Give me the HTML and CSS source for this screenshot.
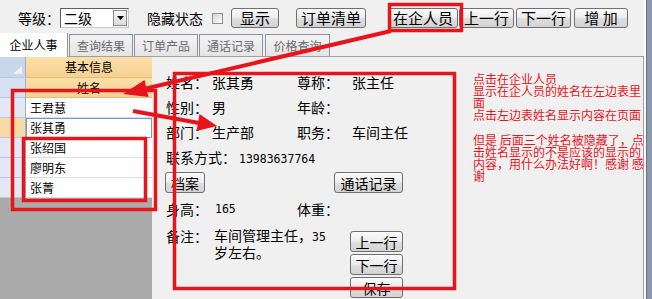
FILE: index.html
```html
<!DOCTYPE html>
<html lang="zh">
<head>
<meta charset="utf-8">
<title>企业人事</title>
<link rel="stylesheet" href="styles.css">
</head>
<body>
<div class="win">
  <div class="app">
    <div class="toolbar">
      <span class="lbl">等级：</span>
      <div class="combo">
        <span class="combo-val">二级</span>
        <span class="combo-btn"><svg width="7" height="4" viewBox="0 0 7 4"><polygon points="0,0 7,0 3.5,4" fill="#000"/></svg></span>
      </div>
      <span class="lbl lbl-hidden">隐藏状态</span>
      <span class="check"></span>
      <button class="btn btn-show">显示</button>
      <button class="btn btn-orders">订单清单</button>
      <button class="btn btn-staff">在企人员</button>
      <button class="btn btn-prev">上一行</button>
      <button class="btn btn-next">下一行</button>
      <button class="btn btn-add">增&nbsp;加</button>
    </div>
    <div class="tabs">
      <div class="tab active">企业人事</div>
      <div class="tab">查询结果</div>
      <div class="tab">订单产品</div>
      <div class="tab">通话记录</div>
      <div class="tab tab-last">价格查询</div>
    </div>
    <div class="main">
      <div class="sheet">
        <div class="srow h1">
          <div class="sel sel-corner"><svg width="9" height="8" viewBox="0 0 9 8"><polygon points="9,0 9,8 0,8" fill="#eef3fa"/></svg></div>
          <div class="hd">基本信息</div>
        </div>
        <div class="srow">
          <div class="sel sel-h2"></div>
          <div class="hd">姓名</div>
        </div>
        <div class="srow"><div class="sel"></div><div class="cell">王君慧</div></div>
        <div class="srow"><div class="sel sel-cur"></div><div class="cell cell-cur">张其勇</div></div>
        <div class="srow"><div class="sel"></div><div class="cell">张绍国</div></div>
        <div class="srow"><div class="sel"></div><div class="cell">廖明东</div></div>
        <div class="srow"><div class="sel"></div><div class="cell">张菁</div></div>
      </div>
      <div class="form">
        <div class="frow"><span>姓名：</span><span>张其勇</span><span>尊称：</span><span>张主任</span></div>
        <div class="frow"><span>性别：</span><span>男</span><span>年龄：</span><span></span></div>
        <div class="frow"><span>部门：</span><span>生产部</span><span>职务：</span><span>车间主任</span></div>
        <div class="frow frow-contact"><span>联系方式：<span class="num num-tel">13983637764</span></span></div>
        <div class="fbtns">
          <button class="btn fbtn btn-file">档案</button>
          <button class="btn fbtn btn-calls">通话记录</button>
        </div>
        <div class="frow frow-body"><span>身高：</span><span class="num num-h">165</span><span>体重：</span><span></span></div>
        <div class="remarks">
          <span class="rlabel">备注：</span>
          <span class="rtext">车间管理主任，<span class="num">35</span><br>岁左右。</span>
          <div class="rbtns">
            <button class="btn fbtn">上一行</button>
            <button class="btn fbtn">下一行</button>
            <button class="btn fbtn">保存</button>
          </div>
        </div>
      </div>
      <div class="notes">
        <p>点击在企业人员<br>显示在企人员的姓名在左边表里<br>面<br>点击左边表姓名显示内容在页面</p>
        <p>但是 后面三个姓名被隐藏了，点<br>击姓名显示的不是应该的显示的<br>内容，用什么办法好啊！感谢 感<br>谢</p>
      </div>
    </div>
  </div>
  <div class="edge"><span class="edge-light"></span><span class="edge-dark"></span><span class="edge-frame"></span></div>
  <svg class="annot" width="652" height="299" viewBox="0 0 652 299">
    <g fill="none" stroke="#e8141c" stroke-width="3.5">
      <rect x="389.5" y="4.5" width="72" height="26"/>
      <rect x="174.5" y="73.5" width="280" height="215"/>
      <rect x="12.5" y="90.5" width="143" height="119"/>
      <rect x="23.5" y="138.5" width="122" height="62"/>
      <line x1="391" y1="31" x2="146" y2="88.5" stroke-width="4"/>
      <line x1="133" y1="111" x2="199" y2="123" stroke-width="4"/>
    </g>
    <g fill="#e8141c">
      <polygon points="123,94 148.5,97 144.5,80"/>
      <polygon points="217,126 199.5,114 196.5,131"/>
    </g>
  </svg>
</div>
</body>
</html>
```

FILE: styles.css
```css
* { box-sizing: border-box; margin: 0; padding: 0; }
html, body { width: 652px; height: 299px; overflow: hidden; }
body {
  background: #f0f0f0;
  font-family: "Noto Sans CJK SC", "Noto Sans", sans-serif;
  color: #000;
}
.win { position: relative; display: flex; width: 652px; height: 299px; }
.app { width: 644px; flex-shrink: 0; display: flex; flex-direction: column; }

/* window edge */
.edge { width: 8px; display: flex; }
.edge-light { width: 2px; background: #fafafa; }
.edge-dark { width: 1px; background: #6e6e6e; }
.edge-frame { flex: 1; background: #8a98b2; }

/* toolbar */
.toolbar {
  height: 33px;
  display: flex;
  align-items: center;
  padding: 3px 0 0 18px;
}
.lbl { font-size: 14px; line-height: 20px; }
.lbl-hidden { margin-left: 18px; }
.combo {
  width: 69px; height: 20px;
  border: 1px solid #5c5c5c;
  border-right-color: #c8c8c8; border-bottom-color: #c8c8c8;
  background: #fff;
  display: flex; align-items: center;
  padding: 0 1px 0 3px;
}
.combo-val { flex: 1; font-size: 14px; line-height: 18px; }
.combo-btn {
  width: 14px; height: 16px;
  border: 1px solid #8a8a8a;
  background: linear-gradient(#f7f7f7, #dadada);
  display: flex; align-items: center; justify-content: center;
}
.check {
  width: 11px; height: 11px;
  margin-left: 9px;
  border: 1px solid #8f8f8f;
  background: linear-gradient(135deg, #d6d6d6, #fbfbfb);
}
.btn {
  height: 20px;
  border: 1px solid #707070;
  border-radius: 3px;
  background: linear-gradient(#fbfbfb, #ececec 50%, #dfdfdf 51%, #d3d3d3);
  font-family: "Noto Sans CJK SC", sans-serif;
  font-size: 15px;
  line-height: 18px;
  color: #000;
  display: flex; align-items: center; justify-content: center;
  padding: 0;
  flex-shrink: 0;
}
.btn-show { width: 48px; margin-left: 8px; }
.btn-orders { width: 70px; margin-left: 17px; }
.btn-staff { width: 70px; margin-left: 22px; }
.btn-prev { width: 55px; margin-left: 1px; }
.btn-next { width: 55px; margin-left: 2px; }
.btn-add { width: 54px; margin-left: 3px; }

/* tabs */
.tabs {
  height: 24px;
  display: flex;
  align-items: flex-end;
  border-bottom: 1px solid #a0a0a0;
}
.tab {
  width: 64px; height: 22px;
  margin-left: 1px;
  border: 1px solid #8e929a;
  border-bottom: none;
  background: linear-gradient(#f4f4f4, #e4e4e4);
  color: #6a6a6a;
  font-size: 12px; line-height: 21px;
  text-align: center;
}
.tab-last { width: 65px; margin-left: 2px; }
.tab.active {
  width: 68px; height: 24px;
  margin: 0 0 -1px 0;
  border: none;
  border-right: 1px solid #8e929a;
  background: #fff;
  color: #000;
  line-height: 23px;
}

/* main */
.main {
  flex: 1;
  display: flex;
  border-right: 1px solid #a0a0a0;
}

/* datasheet */
.sheet {
  width: 152px;
  flex-shrink: 0;
  display: flex; flex-direction: column;
  background: #ababab;
}
.srow { display: flex; height: 20px; }
.srow.h1 { height: 21px; }
.sel {
  width: 26px;
  background: #e2e9f4;
  border-right: 1px solid #9cb2cf;
  border-bottom: 1px solid #b9c8de;
}
.sel-corner {
  background: #c8d7ec;
  display: flex; align-items: flex-end; justify-content: flex-end;
  padding: 0 3px 3px 0;
}
.sel-h2 { background: #d6e1f1; }
.sel-cur { background: #f7dba6; }
.hd {
  flex: 1;
  background: linear-gradient(#fbdfa8, #f7d192);
  border-bottom: 1px solid #e5bc72;
  font-size: 12px; line-height: 19px;
  text-align: center;
}
.cell {
  flex: 1;
  background: #fff;
  border-bottom: 1px solid #d8dde6;
  font-size: 12px; line-height: 19px;
  padding-left: 4px;
}
.cell-cur { border: 1px solid #7199cf; padding-left: 3px; line-height: 18px; }

/* form */
.form {
  width: 321px;
  flex-shrink: 0;
  padding: 13px 0 0 14px;
  font-size: 14px;
}
.frow {
  display: grid;
  grid-template-columns: 46px 85px 55px 1fr;
  height: 25px;
  line-height: 25px;
  white-space: nowrap;
}
.num {
  font-family: "DejaVu Sans Mono", "Liberation Mono", monospace;
  font-size: 11.5px;
}
.num-tel { padding-left: 3px; }
.num-h { padding-left: 3px; }
.fbtns {
  display: flex;
  justify-content: space-between;
  width: 238px;
  margin: 2px 0 0 -1px;
}
.fbtn { font-size: 14px; height: 21px; }
.btn-file { width: 40px; }
.btn-calls { width: 69px; }
.frow-body { margin-top: 4px; }
.remarks {
  display: grid;
  grid-template-columns: 46px 138px 53px;
  margin-top: 6px;
}
.rlabel { line-height: 16px; }
.rtext { padding-left: 2px; line-height: 15px; white-space: nowrap; }
.rbtns {
  display: flex; flex-direction: column;
  gap: 2px;
  margin-top: 3px;
}
.rbtns .fbtn { width: 53px; }

/* notes */
.notes {
  flex: 1;
  min-width: 0;
  padding-top: 16px;
  color: #e8141c;
  font-size: 12px;
  line-height: 12px;
  white-space: nowrap;
}
.notes p + p { margin-top: 13px; }

/* annotations */
.annot { position: absolute; left: 0; top: 0; pointer-events: none; }
```
